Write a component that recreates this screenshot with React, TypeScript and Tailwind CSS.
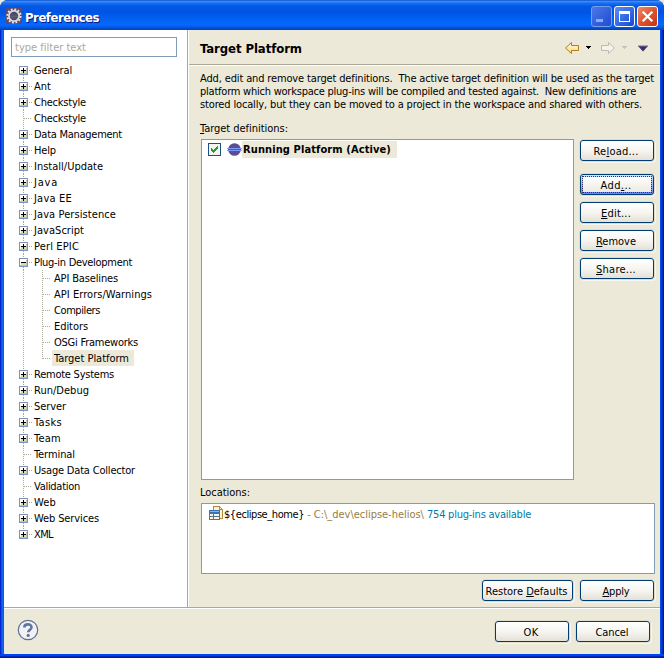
import { useLayoutEffect, useRef } from 'react';
import type { ReactNode } from 'react';

/** Spaces its text out, or tightens it, to fill exactly `w` pixels. */
function Fit({ w, children, className = '' }: { w: number; children: ReactNode; className?: string }) {
  const ref = useRef<HTMLSpanElement>(null);
  useLayoutEffect(() => {
    const el = ref.current;
    if (!el) return;
    el.style.letterSpacing = '0px';
    const natural = el.getBoundingClientRect().width;
    const count = el.textContent?.length || 1;
    el.style.letterSpacing = `${(w - natural) / count}px`;
  }, [w]);
  return (
    <span ref={ref} className={`inline-block shrink-0 whitespace-pre ${className}`}>
      {children}
    </span>
  );
}

const U = ({ children }: { children: ReactNode }) => (
  <span className="underline decoration-1 underline-offset-1">{children}</span>
);

type Kind = 'plus' | 'minus' | 'leaf' | 'child';
const tree: [string, number, Kind][] = [
  ['General', 38, 'plus'],
  ['Ant', 17, 'plus'],
  ['Checkstyle', 52, 'plus'],
  ['Checkstyle', 52, 'leaf'],
  ['Data Management', 88, 'plus'],
  ['Help', 22, 'plus'],
  ['Install/Update', 69, 'plus'],
  ['Java', 24, 'plus'],
  ['Java EE', 38, 'plus'],
  ['Java Persistence', 82, 'plus'],
  ['JavaScript', 50, 'plus'],
  ['Perl EPIC', 45, 'plus'],
  ['Plug-in Development', 98, 'minus'],
  ['API Baselines', 64, 'child'],
  ['API Errors/Warnings', 98, 'child'],
  ['Compilers', 46, 'child'],
  ['Editors', 34, 'child'],
  ['OSGi Frameworks', 84, 'child'],
  ['Target Platform', 75, 'child'],
  ['Remote Systems', 80, 'plus'],
  ['Run/Debug', 55, 'plus'],
  ['Server', 32, 'plus'],
  ['Tasks', 28, 'plus'],
  ['Team', 27, 'plus'],
  ['Terminal', 41, 'leaf'],
  ['Usage Data Collector', 101, 'plus'],
  ['Validation', 46, 'leaf'],
  ['Web', 22, 'plus'],
  ['Web Services', 65, 'plus'],
  ['XML', 19, 'plus'],
];

const VDots = ({ className }: { className: string }) => (
  <span className={`w-px bg-[repeating-linear-gradient(to_bottom,#aca899_0_1px,transparent_1px_2px)] ${className}`} />
);
const HDots = ({ className }: { className: string }) => (
  <span className={`h-px shrink-0 bg-[repeating-linear-gradient(to_right,#aca899_0_1px,transparent_1px_2px)] ${className}`} />
);

function Expander({ minus }: { minus: boolean }) {
  return (
    <svg width="9" height="9" viewBox="0 0 9 9" shapeRendering="crispEdges" className="shrink-0">
      <rect width="9" height="9" fill="#7898b5" />
      <rect x="1" y="1" width="7" height="7" fill="#fff" />
      <path d="M2 5h6v3H2z" fill="#dcd8cb" />
      <path d="M7 2h1v6H7zM1 7h7v1H1z" fill="#c6c0af" />
      <path d="M2 4h5v1H2z" fill="#000" />
      {!minus && <path d="M4 2h1v5H4z" fill="#000" />}
    </svg>
  );
}

function TreeRow({ name, w, kind, first, last }: { name: string; w: number; kind: Kind; first: boolean; last: boolean }) {
  const selected = name === 'Target Platform';
  if (kind === 'child') {
    return (
      <div className="flex h-4 items-center">
        <VDots className="ml-1 h-4" />
        <span className="ml-[18px] flex h-4 flex-col">
          <VDots className={selected ? 'h-[9px]' : 'h-4'} />
        </span>
        <HDots className="mr-px w-[8px]" />
        <span className={`flex h-4 items-center pr-[5px] pl-0.5 ${selected ? 'bg-[#ece9d8]' : ''}`}>
          <Fit w={w} className="pt-[2px]">{name}</Fit>
        </span>
      </div>
    );
  }
  return (
    <div className="flex h-4 items-center">
      <span className="flex h-4 w-[9px] flex-col items-center">
        {kind === 'leaf' ? (
          <VDots className="h-4" />
        ) : (
          <>
            <VDots className={first ? 'h-1 opacity-0' : 'h-1'} />
            <Expander minus={kind === 'minus'} />
            <VDots className={last ? 'h-[3px] opacity-0' : 'h-[3px]'} />
          </>
        )}
      </span>
      {kind === 'leaf' ? <HDots className="-ml-1 mr-0.5 w-[8px]" /> : <HDots className="mr-0.5 ml-px w-[3px]" />}
      <Fit w={w} className="pt-[2px]">{name}</Fit>
    </div>
  );
}

function Button({ w, tw, focus = false, children }: { w: string; tw: number; focus?: boolean; children: ReactNode }) {
  return (
    <div
      className={`flex h-[21px] shrink-0 items-center justify-center rounded-[3px] border border-[#003c74] shadow-[0_0_0_1px_#e0dccb,1px_1px_0_1px_#f7f5ee] ${w} ${
        focus
          ? 'bg-linear-to-b from-[#cee7ff] to-[#6982ee] p-[1px]'
          : 'bg-linear-to-b from-white via-[#f6f5f1] to-[#e4e1d6] pr-[2px]'
      }`}
    >
      {focus ? (
        <div className="flex h-full w-full items-center justify-center border border-dotted border-[#2b3560] bg-linear-to-b from-white to-[#ebe9e1] bg-clip-padding pt-px pr-[2px] leading-[13px]">
          <Fit w={tw}>{children}</Fit>
        </div>
      ) : (
        <Fit w={tw} className="pt-[2px] leading-4">{children}</Fit>
      )}
    </div>
  );
}

function GearIcon() {
  return (
    <svg width="16" height="16" viewBox="0 0 16 16" className="shrink-0">
      <rect width="16" height="16" fill="#5a4a72" />
      <circle cx="8" cy="8" r="6.6" fill="none" stroke="#e9e7e4" strokeWidth="2" strokeDasharray="1.9 1.56" />
      <circle cx="8" cy="8" r="5.1" fill="#474468" stroke="#dedbd7" strokeWidth="1.8" />
      <path d="M4.5 7h7M4 8.5h8M5 10h6" stroke="#6a6684" strokeWidth=".7" />
    </svg>
  );
}

function TitleBar() {
  const cap = 'flex h-[21px] w-[21px] items-center justify-center rounded-[3px] border';
  return (
    <div className="flex h-[30px] shrink-0 items-center rounded-t-[8px] bg-[linear-gradient(to_bottom,#0b4fce_0,#3a8cf5_1.5px,#1a70f0_3px,#0359e5_6px,#0054e3_12px,#0262f4_20px,#0668ff_25px,#0459e4_27px,#0140b5_30px)] pr-[6px] pl-[6px] pt-[2px]">
      <GearIcon />
      <Fit w={74} className="ml-[3px] pt-[3px] font-['DejaVu_Sans_Condensed','DejaVu_Sans',sans-serif] text-[13px] leading-5 font-bold text-white [text-shadow:1px_1px_0_#0a1883]">
        Preferences
      </Fit>
      <div className="ml-auto flex gap-[2px]">
        <div className={`${cap} border-[#7a9eee] bg-linear-to-br from-[#4a77e8] to-[#1f4dd0]`}>
          <svg width="19" height="19" shapeRendering="crispEdges"><path d="M4 12h7v3H4z" fill="#8fa9ee" /></svg>
        </div>
        <div className={`${cap} border-white bg-linear-to-br from-[#5a8df8] to-[#1648ce]`}>
          <svg width="19" height="19" shapeRendering="crispEdges">
            <path d="M4 4h11v11H4zM5 7v7h9V7z" fill="#fff" fillRule="evenodd" />
          </svg>
        </div>
        <div className={`${cap} border-white bg-linear-to-br from-[#ee8a6a] via-[#e0532f] to-[#c5310d]`}>
          <svg width="19" height="19"><path d="M4.7 4.7l9.6 9.6M14.3 4.7l-9.6 9.6" stroke="#fff" strokeWidth="2.2" /></svg>
        </div>
      </div>
    </div>
  );
}

function NavIcons() {
  return (
    <svg width="88" height="16" viewBox="0 0 88 16" className="mt-[2px] shrink-0">
      <defs>
        <linearGradient id="gold" x1="0" y1="0" x2="0" y2="1">
          <stop offset="0" stopColor="#fffbe8" />
          <stop offset="1" stopColor="#fbd679" />
        </linearGradient>
      </defs>
      <path d="M1.500 8L7.500 2.500V5.500H14.500V10.500H7.500V13.500Z" fill="url(#gold)" stroke="#b57b1c" strokeLinejoin="round" />
      <path d="M22 6h5v1h-1v1h-1v1h-1V8h-1V7h-1z" fill="#000" shapeRendering="crispEdges" />
      <path d="M50.500 8L44.500 2.500V5.500H37.500V10.500H44.500V13.500Z" fill="#f3f2ec" stroke="#bdbab0" strokeLinejoin="round" />
      <path d="M58 6h5v1h-1v1h-1v1h-1V8h-1V7h-1z" fill="#c5c2b6" shapeRendering="crispEdges" />
      <path d="M74 6h10l-5 5.500z" fill="#35306f" />
      <path d="M74 6h10" stroke="#77748e" />
    </svg>
  );
}

function EclipseIcon() {
  return (
    <svg width="15" height="13" viewBox="0 0 15 13" className="shrink-0">
      <circle cx="7.5" cy="6.500" r="6.300" fill="#5a4d91" />
      <path d="M0 5.500h15M0 7.500h15" stroke="#7d9bf7" />
      <path d="M1 6.500h13" stroke="#4f59b5" />
    </svg>
  );
}

function BundleIcon() {
  return (
    <svg width="15" height="15" viewBox="0 0 15 15" className="shrink-0" shapeRendering="crispEdges">
      <path d="M4.500 4V.500H10.500L13.500 3.500V12.500H11" fill="#fdf3d6" stroke="#b58a3c" />
      <path d="M10.500 0v3.500h3" fill="none" stroke="#b58a3c" />
      <rect x="0" y="4" width="11" height="10" fill="#5c7088" />
      <path d="M0 4h11v3H0z" fill="#3b6fb5" />
      <path d="M1 5h9v1H1z" fill="#86b4e8" />
      <path d="M1 8h3v2H1zM1 11h3v2H1zM5 8h5v2H5zM5 11h5v2H5z" fill="#f4f6ec" />
    </svg>
  );
}

export default function App() {
  return (
    <div className="h-[658px] w-[664px] bg-[#ece9d8] font-['DejaVu_Sans_Condensed','DejaVu_Sans',sans-serif] text-[11px] leading-4 text-black">
      <div className="flex h-full flex-col rounded-t-[8px] bg-[linear-gradient(to_right,#0019cf_0,#0831d9_1px,#166aee_2px,#0855dd_4px,#0855dd_660px,#0046ee_661px,#0030c8_662px,#00138c_664px)]">
        <TitleBar />
        <div className="mx-[4px] flex min-h-0 flex-1 flex-col bg-[#ece9d8]">
          <div className="flex h-[577px] shrink-0">
            <div className="flex w-[184px] shrink-0 flex-col border-r border-[#aca899] bg-white pt-[7px] pl-[7px]">
              <div className="flex h-5 w-[166px] shrink-0 items-center border border-[#7f9db9] pl-[3px] text-[#aca899]">
                <Fit w={71} className="pt-[2px]">type filter text</Fit>
              </div>
              <div className="mt-[5px] ml-[8px] flex flex-col">
                {tree.map(([name, w, kind], i) => (
                  <TreeRow key={i} name={name} w={w} kind={kind} first={i === 0} last={i === tree.length - 1} />
                ))}
              </div>
            </div>
            <div className="flex flex-1 flex-col border-l border-white">
              <div className="flex h-[35px] shrink-0 items-center justify-between border-b border-[#aca899] pr-[8px] pl-[11px]">
                <Fit w={102} className="pt-[3px] text-[13px] font-bold">Target Platform</Fit>
                <NavIcons />
              </div>
              <div className="flex flex-1 flex-col border-t border-white pt-[6px] pr-[5px] pl-[11px]">
                <div className="flex flex-col leading-[13px]">
                  <Fit w={454} className="self-start">Add, edit and remove target definitions.  The active target definition will be used as the target</Fit>
                  <Fit w={436} className="self-start">platform which workspace plug-ins will be compiled and tested against.  New definitions are</Fit>
                  <Fit w={442} className="self-start">stored locally, but they can be moved to a project in the workspace and shared with others.</Fit>
                </div>
                <div className="mt-[10px] h-4">
                  <Fit w={88}><U>T</U>arget definitions:</Fit>
                </div>
                <div className="mt-[2px] flex">
                  <div className="ml-px h-[341px] w-[373px] shrink-0 border border-[#7f9db9] bg-white pt-px">
                    <div className="flex h-[17px] items-center pl-[6px]">
                      <svg width="13" height="13" viewBox="0 0 13 13" shapeRendering="crispEdges">
                        <rect width="13" height="13" fill="#1c5180" />
                        <rect x="1" y="1" width="11" height="11" fill="#f3f3ef" />
                        <path d="M3 5h1v1h1v1h1V6h1V5h1V4h1V3h1v3H9v1H8v1H7v1H6v1H5V9H4V8H3z" fill="#21a121" />
                      </svg>
                      <span className="ml-[6px] flex"><EclipseIcon /></span>
                      <span className="flex h-[17px] items-center bg-[#ece9d8] pr-[6px] pl-px">
                        <Fit w={148} className="pt-[1px] font-bold">Running Platform (Active)</Fit>
                      </span>
                    </div>
                  </div>
                  <div className="ml-[6px] flex flex-col gap-[7px] pt-px">
                    <Button w="mb-[6px] w-[74px]" tw={45}>Re<U>l</U>oad...</Button>
                    <Button w="w-[74px]" tw={31} focus>Add<U>.</U>..</Button>
                    <Button w="w-[74px]" tw={30}><U>E</U>dit...</Button>
                    <Button w="w-[74px]" tw={40}><U>R</U>emove</Button>
                    <Button w="w-[74px]" tw={40}><U>S</U>hare...</Button>
                  </div>
                </div>
                <div className="mt-[5px] h-4"><Fit w={50}>Locations:</Fit></div>
                <div className="mt-[2px] ml-px flex h-[71px] w-[454px] items-start border border-[#7f9db9] bg-white pt-[2px] pl-[7px]">
                  <BundleIcon />
                  <Fit w={80} className="pt-px">{'${eclipse_home}'}</Fit>
                  <Fit w={123} className="pt-px text-[#957d47]">{' - C:\\_dev\\eclipse-helios\\ '}</Fit>
                  <Fit w={104} className="pt-px text-[#007ba7]">754 plug-ins available</Fit>
                </div>
                <div className="mt-[6px] flex justify-end gap-[7px] pr-px">
                  <Button w="w-[91px]" tw={82}>Restore <U>D</U>efaults</Button>
                  <Button w="w-[74px]" tw={27}><U>A</U>pply</Button>
                </div>
              </div>
            </div>
          </div>
          <div className="flex flex-1 justify-between border-t border-[#aca899]">
            <div className="flex flex-1 items-start justify-between border-t border-white pr-[10px] pl-[13px]">
              <svg width="22" height="22" viewBox="0 0 22 22" className="mt-[10px]">
                <circle cx="11" cy="11" r="9.700" fill="#f2f2f6" stroke="#5d7298" strokeWidth="1.200" />
                <path d="M7.300 8.400C7.300 4.300 14.600 4.400 14.500 8.200C14.500 10.600 11.300 10.700 11.200 13.300" fill="none" stroke="#60769c" strokeWidth="2.600" />
                <circle cx="11.200" cy="16.400" r="1.600" fill="#60769c" />
              </svg>
              <div className="flex gap-[7px] pt-[12px]">
                <Button w="w-[74px]" tw={15}>OK</Button>
                <Button w="w-[74px]" tw={33}>Cancel</Button>
              </div>
            </div>
          </div>
        </div>
        <div className="h-[4px] shrink-0 bg-[linear-gradient(to_bottom,#0046ee_0,#0046ee_1.5px,#0026b8_2.5px,#00138c_4px)]" />
      </div>
    </div>
  );
}
